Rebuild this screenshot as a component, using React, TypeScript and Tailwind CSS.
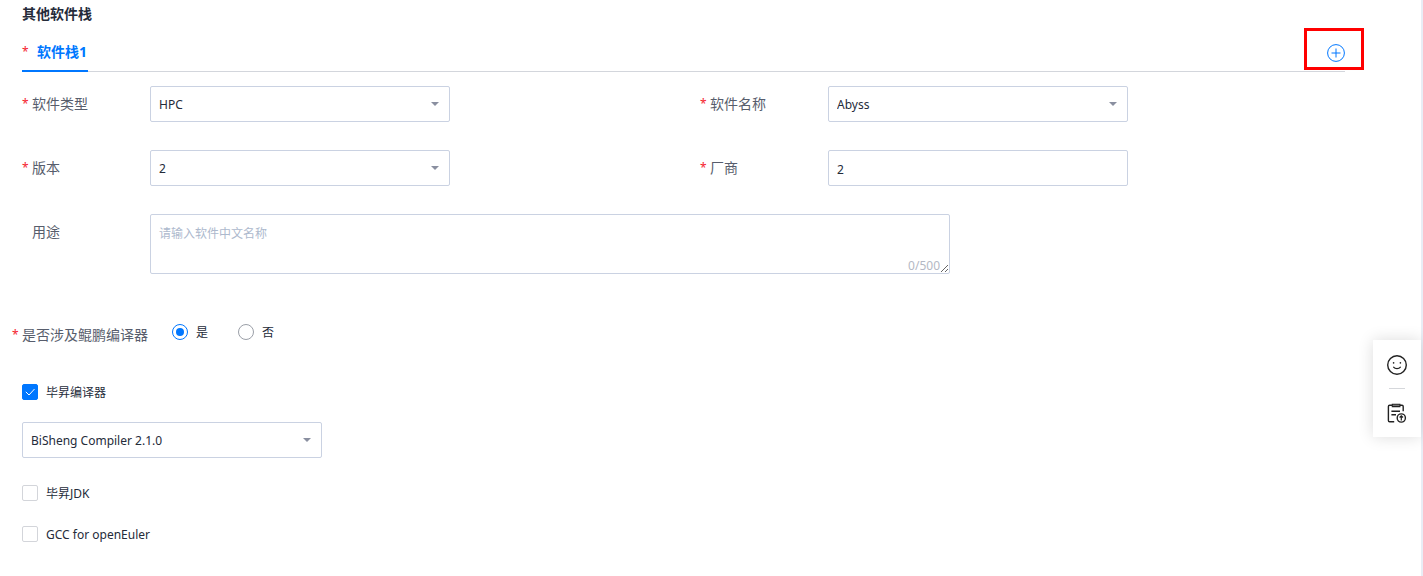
import { useState, type ReactNode } from "react";

function Star() {
  return <span className="w-[10px] shrink-0 text-xs leading-5 text-[#f5222d]">*</span>;
}

function FieldLabel({ htmlFor, required, children }: { htmlFor: string; required?: boolean; children: ReactNode }) {
  return (
    <label htmlFor={htmlFor} className="flex h-9 w-32 shrink-0 items-center text-sm text-[#575d6c]">
      {required ? <Star /> : <span className="w-[10px]" />}
      <span>{children}</span>
    </label>
  );
}

function Select({ id, options, label }: { id: string; options: string[]; label?: string }) {
  return (
    <div className="relative w-[300px]">
      <select
        id={id}
        aria-label={label}
        className="block h-9 w-full appearance-none rounded-xs border border-[#cad2e2] bg-white px-2 pt-0.5 text-xs text-[#252b3a] outline-none focus:border-[#0077ff]"
      >
        {options.map((o) => (
          <option key={o}>{o}</option>
        ))}
      </select>
      <svg className="pointer-events-none absolute top-4 right-[11px] h-1 w-2" viewBox="0 0 8 4" aria-hidden="true">
        <path d="M0 0h8L4 4z" fill="#8a8fa0" />
      </svg>
    </div>
  );
}

function Radio({ label, checked, onChange }: { label: string; checked: boolean; onChange: () => void }) {
  return (
    <label className="flex h-5 items-center gap-2 text-xs text-[#252b3a]">
      <input
        type="radio"
        name="kunpeng"
        checked={checked}
        onChange={onChange}
        className="size-4 appearance-none rounded-full border border-[#9b9fa8] bg-white p-[3px] before:block before:size-2 before:rounded-full checked:border-[#0077ff] checked:before:bg-[#0077ff]"
      />
      <span className="pt-0.5">{label}</span>
    </label>
  );
}

function Checkbox({ label, defaultChecked }: { label: string; defaultChecked?: boolean }) {
  return (
    <label className="flex h-5 w-fit items-center gap-2 text-xs text-[#252b3a]">
      <span className="relative size-4">
        <input
          type="checkbox"
          defaultChecked={defaultChecked}
          className="peer block size-4 appearance-none rounded-xs border border-[#d3d5da] bg-white checked:border-[#0077ff] checked:bg-[#0077ff]"
        />
        <svg
          className="pointer-events-none absolute inset-0 hidden size-4 peer-checked:block"
          viewBox="0 0 16 16"
          fill="none"
          stroke="#fff"
          aria-hidden="true"
        >
          <path d="M3.8 7.8 7 11l5.5-6" />
        </svg>
      </span>
      <span className="pt-0.5">{label}</span>
    </label>
  );
}

export default function App() {
  const [uses, setUses] = useState(true);
  const [purpose, setPurpose] = useState("");

  return (
    <div className="min-h-screen border-r-2 border-[#e9edf5] bg-white font-['Noto_Sans','Noto_Sans_CJK_SC',sans-serif]">
      <main className="pt-1 pb-8 pl-[22px]">
        <h2 className="text-sm leading-5 font-bold text-[#252b3a]">其他软件栈</h2>

        <div className="mt-2 mr-[76px] flex h-10 justify-between border-b border-[#d3d6dc]">
          <button type="button" className="-mb-px flex items-center border-b-2 border-[#0077ff] pt-0.5 pr-px text-sm font-bold text-[#0077ff]">
            <span className="w-[15px] text-left text-xs font-normal text-[#f5222d]">*</span>
            软件栈1
          </button>
          <button type="button" aria-label="添加软件栈" className="relative mt-3 size-[18px]">
            <svg viewBox="0 0 18 18" className="size-[18px]" fill="none" stroke="#0077ff" aria-hidden="true">
              <circle cx="9" cy="9" r="8.4" />
              <path d="M4.5 9h9M9 4.5v9" />
            </svg>
            <span className="absolute -top-4 -left-[23px] h-[42px] w-[60px] border-3 border-[#ff0000]" />
          </button>
        </div>

        <div className="mt-[14px] mr-[43px] grid grid-cols-2 gap-y-7">
          <div className="flex">
            <FieldLabel htmlFor="type" required>软件类型</FieldLabel>
            <Select id="type" options={["HPC"]} />
          </div>
          <div className="flex">
            <FieldLabel htmlFor="name" required>软件名称</FieldLabel>
            <Select id="name" options={["Abyss"]} />
          </div>
          <div className="flex">
            <FieldLabel htmlFor="version" required>版本</FieldLabel>
            <Select id="version" options={["2"]} />
          </div>
          <div className="flex">
            <FieldLabel htmlFor="vendor" required>厂商</FieldLabel>
            <input
              id="vendor"
              type="text"
              defaultValue="2"
              className="h-9 w-[300px] rounded-xs border border-[#cad2e2] px-2 pt-0.5 text-xs text-[#252b3a] outline-none focus:border-[#0077ff]"
            />
          </div>
          <div className="col-span-2 flex">
            <FieldLabel htmlFor="purpose">用途</FieldLabel>
            <div className="relative w-[800px]">
              <textarea
                id="purpose"
                maxLength={500}
                value={purpose}
                onChange={(e) => setPurpose(e.target.value)}
                placeholder="请输入软件中文名称"
                className="block h-[60px] w-full resize rounded-xs border border-[#cad2e2] px-2 py-[9px] text-xs leading-5 text-[#252b3a] outline-none placeholder:text-[#adb9cd] focus:border-[#0077ff]"
              />
              <span className="pointer-events-none absolute right-[10px] bottom-0 text-xs leading-4 text-[#b4b8c4]">
                {purpose.length}/500
              </span>
            </div>
          </div>
        </div>

        <div role="radiogroup" aria-labelledby="kunpeng-label" className="mt-12 -ml-[10px] flex">
          <span id="kunpeng-label" className="flex w-40 pt-[3px] text-sm leading-5 text-[#575d6c]">
            <Star />
            <span className="whitespace-nowrap">是否涉及鲲鹏编译器</span>
          </span>
          <div className="flex gap-[30px]">
            <Radio label="是" checked={uses} onChange={() => setUses(true)} />
            <Radio label="否" checked={!uses} onChange={() => setUses(false)} />
          </div>
        </div>

        <div className="mt-[37px] flex flex-col">
          <Checkbox label="毕昇编译器" defaultChecked />
          <div className="mt-5 mb-[25px]">
            <Select id="compiler" label="毕昇编译器版本" options={["BiSheng Compiler 2.1.0"]} />
          </div>
          <div className="flex flex-col gap-[21px]">
            <Checkbox label="毕昇JDK" />
            <Checkbox label="GCC for openEuler" />
          </div>
        </div>
      </main>

      <aside className="fixed right-0.5 bottom-[139px] flex w-12 flex-col items-center bg-white shadow-[0_0_16px_rgba(0,0,0,0.14)]">
        <button type="button" aria-label="满意度" className="flex h-12 w-full items-center justify-center pt-[2px]">
          <svg viewBox="0 0 22 22" className="size-[22px]" fill="none" stroke="#222" strokeWidth="1.4" strokeLinecap="round" aria-hidden="true">
            <circle cx="11" cy="11" r="9.3" />
            <path d="M7.6 13.2c1.5 2 5.3 2 6.8 0" strokeWidth="1.2" />
            <path d="M7.6 8.8v.1M14.4 8.8v.1" strokeWidth="1.6" />
          </svg>
        </button>
        <span className="h-px w-4 bg-[#d5d7db]" />
        <button type="button" aria-label="反馈" className="flex h-12 w-full items-center justify-center">
          <svg viewBox="0 0 22 22" className="size-[22px]" fill="none" stroke="#222" strokeWidth="1.4" aria-hidden="true">
            <path d="M6 3.2H3.6q-1.2 0-1.2 1.2v14.2q0 1.2 1.2 1.2h4.6M14 3.2h2q1.2 0 1.2 1.2v4.8" />
            <path d="M6.3 2.2h7.6v2.4H6.3z" fill="#777" strokeWidth="1.1" />
            <path d="M5.4 9.2h8.6M5.4 12.8h4.6" />
            <circle cx="15.3" cy="16" r="4.1" />
            <path d="M15.3 18.4v-4.4M13.6 15.5l1.7-1.7 1.7 1.7" strokeWidth="1.2" />
          </svg>
        </button>
      </aside>
    </div>
  );
}
